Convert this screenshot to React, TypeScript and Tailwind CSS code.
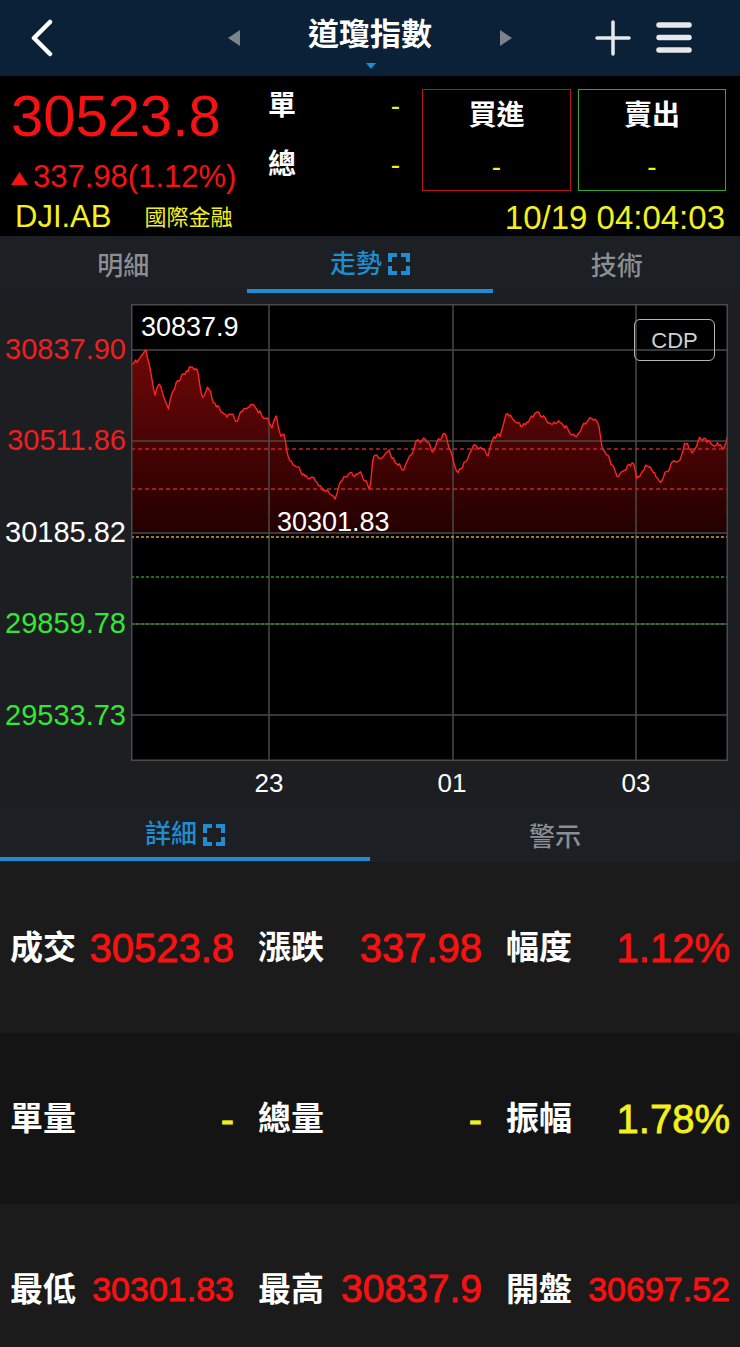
import React from "react";

// rough shape of the intraday line, in page pixels (x, y)
const KEY: [number, number][] = [
  [131, 367], [137, 362], [142, 355], [146, 351], [150, 370], [155, 395], [160, 383], [164, 398],
  [168, 410], [173, 392], [177, 383], [185, 372], [193, 365], [198, 372], [202, 395], [208, 387],
  [213, 400], [218, 407], [227, 415], [232, 410], [237, 423], [242, 412], [252, 406], [260, 412],
  [268, 418], [272, 427], [276, 415], [280, 433], [285, 437], [288, 457], [293, 463], [302, 473],
  [308, 477], [318, 485], [327, 490], [335, 500], [340, 483], [350, 472], [355, 477], [360, 473],
  [366, 482], [370, 488], [373, 457], [383, 457], [388, 450], [395, 462], [402, 468], [407, 463],
  [417, 440], [428, 440], [432, 452], [437, 442], [445, 433], [450, 450], [458, 473], [465, 462],
  [473, 448], [483, 445], [488, 455], [492, 438], [500, 435], [505, 415], [513, 420], [523, 428],
  [530, 418], [537, 412], [545, 418], [552, 428], [557, 422], [567, 427], [575, 437], [583, 425],
  [590, 417], [598, 422], [602, 447], [608, 455], [617, 477], [625, 468], [633, 463], [637, 480],
  [647, 465], [653, 473], [660, 483], [665, 472], [672, 463], [678, 467], [685, 442], [692, 452],
  [700, 437], [710, 443], [718, 443], [723, 450], [727, 437],
];

function buildLine() {
  let seed = 11;
  const rand = () => {
    seed = (seed * 16807) % 2147483647;
    return seed / 2147483647;
  };
  const pts: [number, number][] = [];
  let n = 0;
  let i = 0;
  for (let x = 131; x <= 727; x += 1.5) {
    while (i < KEY.length - 2 && KEY[i + 1][0] < x) i++;
    const [x0, y0] = KEY[i];
    const [x1, y1] = KEY[i + 1];
    const t = Math.min(1, Math.max(0, (x - x0) / (x1 - x0)));
    n = n * 0.5 + (rand() - 0.5) * 5;
    let y = y0 + (y1 - y0) * t + n;
    y = Math.min(500, Math.max(350, y));
    pts.push([x - 131, y - 304]);
  }
  pts.push([596, 437 - 304]);
  return pts;
}

const LINE = buildLine();
const LINE_D = LINE.map((p, k) => `${k ? "L" : "M"}${p[0].toFixed(1)} ${p[1].toFixed(1)}`).join(" ");
const AREA_D = `${LINE_D} L596 229 L0 229 Z`;

function Expand() {
  return (
    <svg width="22" height="22" viewBox="0 0 22 22" fill="none" stroke="#1e8dd2" strokeWidth="4">
      <path d="M2 9V2h7M13 2h7v7M20 13v7h-7M9 20H2v-7" />
    </svg>
  );
}

function Chart() {
  const grid = [46, 137, 229, 320, 411];
  const vgrid = [138, 322, 505];
  return (
    <svg width="597" height="457" viewBox="0 0 597 457" className="block">
      <defs>
        <linearGradient id="fill" x1="0" y1="46" x2="0" y2="229" gradientUnits="userSpaceOnUse">
          <stop offset="0" stopColor="#6e0707" />
          <stop offset="1" stopColor="#240000" />
        </linearGradient>
      </defs>
      <rect x="0" y="0" width="597" height="457" fill="#000" />
      <path d={AREA_D} fill="url(#fill)" />
      {grid.map((y) => (
        <line key={y} x1="0" x2="597" y1={y} y2={y} stroke="#4a4a4a" strokeWidth="1.5" />
      ))}
      {vgrid.map((x) => (
        <line key={x} x1={x} x2={x} y1="0" y2="457" stroke="#4a4a4a" strokeWidth="1.5" />
      ))}
      <line x1="0" x2="597" y1="145" y2="145" stroke="#c4262b" strokeWidth="1.3" strokeDasharray="4 3" />
      <line x1="0" x2="597" y1="185" y2="185" stroke="#c4262b" strokeWidth="1.3" strokeDasharray="4 3" />
      <line x1="0" x2="597" y1="233" y2="233" stroke="#d0a030" strokeWidth="1.3" strokeDasharray="3 2" />
      <line x1="0" x2="597" y1="273" y2="273" stroke="#2f8a2f" strokeWidth="1.3" strokeDasharray="3 2" />
      <line x1="0" x2="597" y1="320" y2="320" stroke="#2f8a2f" strokeWidth="1.3" strokeDasharray="3 2" />
      <path d={LINE_D} fill="none" stroke="#ff2424" strokeWidth="1.4" strokeLinejoin="round" />
      <rect x="0.75" y="0.75" width="595.5" height="455.5" fill="none" stroke="#4a4a4a" strokeWidth="1.5" />
    </svg>
  );
}

const ROWS: { label: string; value: string; color: string; size: string }[][] = [
  [
    { label: "成交", value: "30523.8", color: "text-[#f71212]", size: "text-[40px]" },
    { label: "漲跌", value: "337.98", color: "text-[#f71212]", size: "text-[40px]" },
    { label: "幅度", value: "1.12%", color: "text-[#f71212]", size: "text-[40px]" },
  ],
  [
    { label: "單量", value: "-", color: "text-[#f3f01c]", size: "text-[40px]" },
    { label: "總量", value: "-", color: "text-[#f3f01c]", size: "text-[40px]" },
    { label: "振幅", value: "1.78%", color: "text-[#f3f01c]", size: "text-[40px]" },
  ],
  [
    { label: "最低", value: "30301.83", color: "text-[#f71212]", size: "text-[34px]" },
    { label: "最高", value: "30837.9", color: "text-[#f71212]", size: "text-[39px]" },
    { label: "開盤", value: "30697.52", color: "text-[#f71212]", size: "text-[34px]" },
  ],
];

const Y_LABELS = [
  { v: "30837.90", c: "text-[#f01e1e]" },
  { v: "30511.86", c: "text-[#f01e1e]" },
  { v: "30185.82", c: "text-white" },
  { v: "29859.78", c: "text-[#33e633]" },
  { v: "29533.73", c: "text-[#33e633]" },
];

const X_TICKS = [
  { label: "23", x: 138 },
  { label: "01", x: 321 },
  { label: "03", x: 505 },
];

export default function App() {
  return (
    <div className="w-[740px] h-[1347px] overflow-hidden bg-black font-['Liberation_Sans','Noto_Sans_CJK_TC',sans-serif]">
      {/* header */}
      <div className="h-[76px] bg-[#0b2137] grid grid-cols-[1fr_auto_1fr] items-center">
        <div className="pl-[28px]">
          <svg width="28" height="38" viewBox="0 0 28 38" fill="none" stroke="white" strokeWidth="4.5" strokeLinecap="round" strokeLinejoin="round">
            <path d="M22 3L6 19l16 16" />
          </svg>
        </div>
        <div className="flex items-center">
          <svg width="12" height="16" viewBox="0 0 12 16">
            <path d="M12 0v16L0 8z" fill="#7b848b" />
          </svg>
          <div className="relative mx-[68px] mb-[6px]">
            <span className="text-[31px] leading-[40px] font-bold text-white">道瓊指數</span>
            <svg width="10" height="6" viewBox="0 0 10 6" className="absolute left-[58px] top-[48px]">
              <path d="M0 0h10L5 6z" fill="#1e8dd2" />
            </svg>
          </div>
          <svg width="12" height="16" viewBox="0 0 12 16">
            <path d="M0 0v16L12 8z" fill="#7b848b" />
          </svg>
        </div>
        <div className="flex justify-end items-center gap-[25px] pr-[48px]">
          <svg width="36" height="36" viewBox="0 0 36 36" stroke="#e6e9ec" strokeWidth="3.5" strokeLinecap="round">
            <path d="M18 2v32M2 18h32" />
          </svg>
          <svg width="36" height="34" viewBox="0 0 36 34" stroke="#e6e9ec" strokeWidth="5.5" strokeLinecap="round">
            <path d="M3 4h30M3 16.5h30M3 29h30" />
          </svg>
        </div>
      </div>

      {/* quote */}
      <div className="h-[160px] bg-black">
        <div className="flex h-[115px]">
          <div className="w-[256px] pt-[11px] pl-[11px] flex flex-col">
            <span className="text-[58px] leading-[57px] text-[#f71212] whitespace-nowrap">30523.8</span>
            <div className="flex items-center mt-[18px] h-[30px] whitespace-nowrap">
              <svg width="17" height="13" viewBox="0 0 17 13" className="mr-[5px] mt-[3px] shrink-0">
                <path d="M8.5 0L17 13H0z" fill="#f71212" />
              </svg>
              <span className="text-[31px] leading-[30px] text-[#f71212]">337.98(1.12%)</span>
            </div>
          </div>
          <div className="w-[166px] pt-[13px] pl-[12px] pr-[22px] flex flex-col gap-[25px]">
            <div className="h-[34px] flex items-center justify-between">
              <span className="text-[28px] font-bold text-white">單</span>
              <span className="text-[28px] text-[#f3f01c]">-</span>
            </div>
            <div className="h-[34px] flex items-center justify-between">
              <span className="text-[28px] font-bold text-white">總</span>
              <span className="text-[28px] text-[#f3f01c]">-</span>
            </div>
          </div>
          <div className="mt-[13px] w-[149px] h-[102px] border-[1.5px] border-[#b3161b] flex flex-col items-center pt-[9px]">
            <span className="h-[34px] leading-[34px] text-[28px] font-bold text-white">買進</span>
            <span className="mt-[17px] h-[34px] leading-[34px] text-[28px] text-[#f3f01c]">-</span>
          </div>
          <div className="mt-[13px] ml-[7px] w-[148px] h-[102px] border-[1.5px] border-[#2fa83a] flex flex-col items-center pt-[9px]">
            <span className="h-[34px] leading-[34px] text-[28px] font-bold text-white">賣出</span>
            <span className="mt-[17px] h-[34px] leading-[34px] text-[28px] text-[#f3f01c]">-</span>
          </div>
        </div>
        <div className="h-[45px] pt-[8px] flex items-center text-[#f3f01c] whitespace-nowrap">
          <span className="ml-[15px] text-[31px]">DJI.AB</span>
          <span className="ml-[33px] text-[22px]">國際金融</span>
          <span className="ml-auto mr-[15px] text-[33px]">10/19 04:04:03</span>
        </div>
      </div>

      {/* chart tabs */}
      <div className="h-[58px] bg-[#1c1f23] grid grid-cols-3 text-[26px] font-medium text-[#8b8e92]">
        <div className="flex flex-col pt-[3px]">
          <div className="flex-1 flex items-center justify-center">明細</div>
        </div>
        <div className="flex flex-col pt-[3px]">
          <div className="flex-1 flex items-center justify-center gap-[6px] text-[#1e8dd2]">
            走勢
            <Expand />
          </div>
          <div className="h-[4px] mb-[1px] bg-[#1e8dd2]" />
        </div>
        <div className="flex flex-col pt-[3px]">
          <div className="flex-1 flex items-center justify-center">技術</div>
        </div>
      </div>

      {/* chart */}
      <div className="h-[512px] bg-[#1c1e21] pt-[10px]">
        <div className="flex">
          <div className="w-[131px] h-[457px] flex flex-col pr-[5px]">
            {Y_LABELS.map((l) => (
              <div key={l.v} className={`h-[91.4px] flex items-center justify-end text-[29px] ${l.c}`}>
                {l.v}
              </div>
            ))}
          </div>
          <div className="relative w-[597px] h-[457px]">
            <Chart />
            <span className="absolute left-[10px] top-[10px] text-[27px] leading-[26px] text-white">30837.9</span>
            <span className="absolute left-[146px] top-[205px] text-[27px] leading-[26px] text-white">30301.83</span>
            <div className="absolute left-[503px] top-[15px] w-[81px] h-[42px] rounded-[6px] border-[1.5px] border-[#b5b5b5] flex items-center justify-center text-[22px] text-[#cfcfcf]">
              CDP
            </div>
          </div>
        </div>
        <div className="relative ml-[131px] w-[597px] h-[45px]">
          {X_TICKS.map((t) => (
            <span
              key={t.label}
              className="absolute top-[7px] -translate-x-1/2 text-[26px] leading-[30px] text-white"
              style={{ left: t.x }}
            >
              {t.label}
            </span>
          ))}
        </div>
      </div>

      {/* detail tabs */}
      <div className="h-[56px] bg-[#1c1f23] grid grid-cols-2 text-[26px] font-medium text-[#8b8e92]">
        <div className="flex flex-col pt-[6px]">
          <div className="flex-1 flex items-center justify-center gap-[6px] text-[#1e8dd2]">
            詳細
            <Expand />
          </div>
          <div className="h-[4px] mb-[1px] bg-[#1e8dd2]" />
        </div>
        <div className="flex flex-col pt-[6px]">
          <div className="flex-1 flex items-center justify-center">警示</div>
        </div>
      </div>

      {/* details */}
      {ROWS.map((row, r) => (
        <div
          key={r}
          className={`h-[171px] px-[10px] grid grid-cols-3 gap-x-[24px] items-center ${r % 2 ? "bg-[#141414]" : "bg-[#1b1b1b]"}`}
        >
          {row.map((c) => (
            <div key={c.label} className="flex items-center justify-between whitespace-nowrap">
              <span className="shrink-0 text-[33px] font-bold text-white">{c.label}</span>
              <span className={`${c.size} ${c.color} [-webkit-text-stroke:0.8px_currentColor]`}>{c.value}</span>
            </div>
          ))}
        </div>
      ))}
    </div>
  );
}
